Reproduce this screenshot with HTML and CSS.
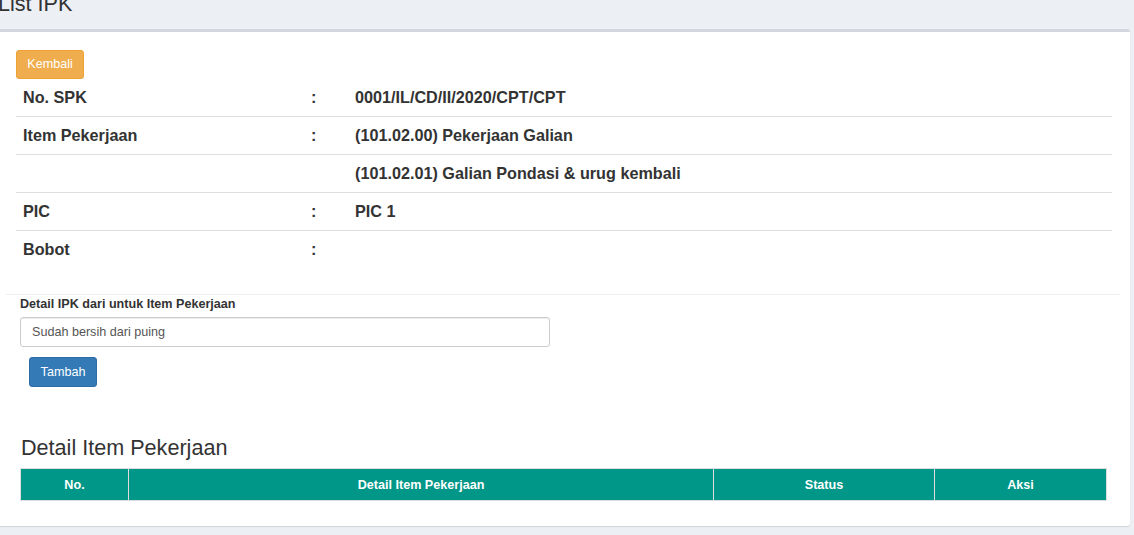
FILE: index.html
```html
<!DOCTYPE html>
<html lang="id">
<head>
<meta charset="utf-8">
<title>List IPK</title>
<link rel="stylesheet" href="styles.css">
</head>
<body>
<div class="content-header">
  <h1 class="page-title">List IPK</h1>
</div>
<section class="box">
  <div class="box-top">
    <button class="btn btn-warning" type="button">Kembali</button>
    <div class="info">
      <div class="info-row"><div class="c-label">No. SPK</div><div class="c-colon">:</div><div class="c-value">0001/IL/CD/II/2020/CPT/CPT</div></div>
      <div class="info-row"><div class="c-label">Item Pekerjaan</div><div class="c-colon">:</div><div class="c-value">(101.02.00) Pekerjaan Galian</div></div>
      <div class="info-row"><div class="c-label"></div><div class="c-colon"></div><div class="c-value">(101.02.01) Galian Pondasi &amp; urug kembali</div></div>
      <div class="info-row"><div class="c-label">PIC</div><div class="c-colon">:</div><div class="c-value">PIC 1</div></div>
      <div class="info-row"><div class="c-label">Bobot</div><div class="c-colon">:</div><div class="c-value"></div></div>
    </div>
  </div>
  <hr class="divider">
  <div class="form">
    <label class="form-label" for="detail">Detail IPK dari untuk Item Pekerjaan</label>
    <input class="form-input" id="detail" type="text" value="Sudah bersih dari puing">
    <button class="btn btn-primary btn-add" type="button">Tambah</button>
  </div>
  <h3 class="section-title">Detail Item Pekerjaan</h3>
  <table class="data-table">
    <thead>
      <tr>
        <th class="col-no">No.</th>
        <th class="col-detail">Detail Item Pekerjaan</th>
        <th class="col-status">Status</th>
        <th class="col-aksi">Aksi</th>
      </tr>
    </thead>
  </table>
</section>
</body>
</html>
```

FILE: styles.css
```css
html, body {
  margin: 0;
  padding: 0;
}
body {
  background: #ecf0f5;
  font-family: "Liberation Sans", Arial, Helvetica, sans-serif;
  color: #333;
  width: 1134px;
  height: 535px;
  overflow: hidden;
}
.content-header {
  height: 29px;
  overflow: hidden;
}
.page-title {
  margin: -7px 0 0 -2px;
  font-size: 21.6px;
  line-height: 21.6px;
  font-weight: normal;
  color: #333;
}
.box {
  width: 1130px;
  height: 494px;
  background: #fff;
  border-top: 3px solid #d2d6de;
  border-radius: 0 3px 3px 0;
  box-shadow: 0 1px 1px rgba(0, 0, 0, 0.12);
  box-sizing: content-box;
}
.box-top {
  padding: 18px 0 0 16px;
}
.btn {
  display: block;
  box-sizing: border-box;
  width: 68px;
  height: 29px;
  padding: 0;
  font-family: inherit;
  font-size: 12.6px;
  line-height: 1;
  color: #fff;
  border-radius: 3px;
  border: 1px solid transparent;
}
.btn-warning {
  background: #f0ad4e;
  border-color: #eea236;
}
.btn-primary {
  background: #337ab7;
  border-color: #2e6da4;
}
.info {
  width: 1096px;
}
.info-row {
  display: grid;
  grid-template-columns: 290px 42px 1fr;
  height: 37px;
  align-items: center;
  border-bottom: 1px solid #ddd;
  font-size: 16.2px;
  font-weight: bold;
  color: #333;
}
.info-row:last-child {
  border-bottom: 0;
}
.c-label, .c-value {
  padding-left: 7px;
}
.c-colon {
  padding-left: 5px;
}
.divider {
  margin: 26px 0 0 6px;
  width: 1114px;
  border: 0;
  border-top: 1px solid #eee;
  height: 0;
}
.form {
  padding-left: 20px;
}
.form-label {
  display: block;
  font-size: 12.6px;
  font-weight: bold;
  line-height: 18px;
  color: #333;
}
.form-input {
  display: block;
  box-sizing: border-box;
  margin-top: 4px;
  width: 530px;
  height: 30px;
  padding: 0 11px;
  border: 1px solid #ccc;
  border-radius: 3px;
  font-family: inherit;
  font-size: 12.6px;
  color: #555;
  box-shadow: inset 0 1px 1px rgba(0, 0, 0, 0.075);
}
.btn-add {
  margin: 10px 0 0 9px;
  height: 30px;
}
.section-title {
  margin: 49px 0 8px 21px;
  font-size: 21.6px;
  line-height: 24px;
  font-weight: normal;
  color: #333;
}
.data-table {
  margin-left: 20px;
  width: 1087px;
  border-collapse: collapse;
  table-layout: fixed;
}
.data-table th {
  background: #009688;
  color: #fff;
  font-size: 12.6px;
  font-weight: bold;
  height: 31px;
  padding: 0;
  text-align: center;
  border: 1px solid #ddd;
}
.col-no { width: 107px; }
.col-detail { width: 584px; }
.col-status { width: 220px; }
.col-aksi { width: auto; }
```
